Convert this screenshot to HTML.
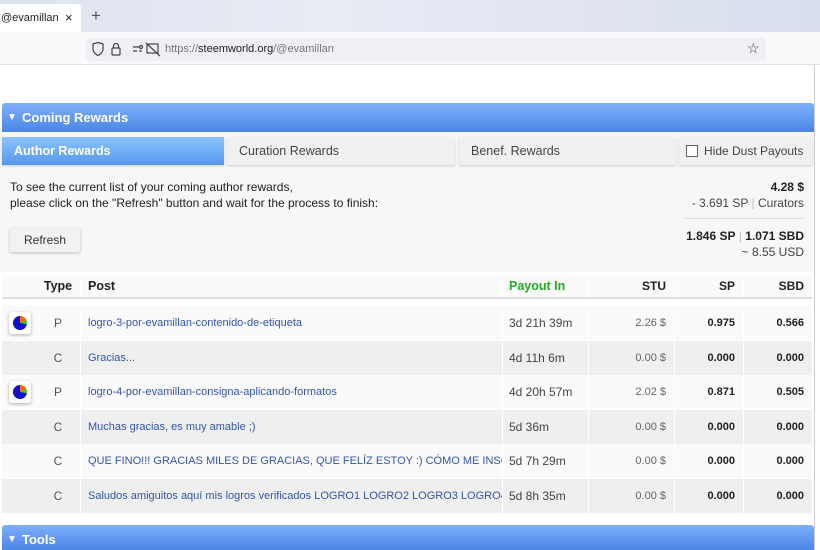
<!DOCTYPE html>
<html><head><style>
*{margin:0;padding:0;box-sizing:border-box}
body{width:820px;height:550px;overflow:hidden;background:#fff;font-family:"Liberation Sans",sans-serif;font-size:12px;color:#333;position:relative}
.a{position:absolute}
.hdr{background:linear-gradient(#7eb0fb,#4a85e6);color:#fff;font-weight:bold;font-size:13px;border-radius:3px 3px 0 0}
.tab{background:#f0f0f0;color:#444;font-size:12.5px;padding:7px 12px;height:28px;box-shadow:0 1px 2px #ccc;white-space:nowrap}
.row{position:absolute;left:2px;width:810px;height:34px}
.row div{position:absolute;top:0;height:34px;line-height:34px}
.c1{left:0;width:34px}
.c2{left:34px;width:44px;text-align:center;color:#555}
.c3{left:78px;width:422px;padding-left:7px;color:#3355aa;white-space:nowrap;overflow:hidden;border-left:1px solid #fff;font-size:11px}
.c4{left:500px;width:86px;padding-left:6px;color:#444;border-left:1px solid #fff}
.c5{left:586px;width:86px;text-align:right;padding-right:8px;color:#666;font-size:11px;border-left:1px solid #fff}
.c6{left:672px;width:69px;text-align:right;padding-right:8px;font-weight:bold;font-size:11px;color:#222;border-left:1px solid #fff}
.c7{left:741px;width:69px;text-align:right;padding-right:8px;font-weight:bold;font-size:11px;color:#222;border-left:1px solid #fff}
.g{background:#efefef}.w{background:#fafafa}
.pie{position:absolute;left:7px;top:6px;width:22px;height:22px;background:#fff;border-radius:3px;box-shadow:0 1px 3px #aaa}
.pie i{position:absolute;left:4px;top:4px;width:14px;height:14px;border-radius:50%;background:conic-gradient(#f60 0 18%,#3c3 18% 28%,#11c 28%)}
</style></head><body>
<div class="a" style="left:0;top:0;width:820px;height:32px;background:linear-gradient(90deg,#dfe3ee,#e9ecf5 40%,#d8deec)"></div>
<div class="a" style="left:0;top:4px;width:81px;height:28px;background:#fff;border-radius:0 4px 0 0;font-size:11px;color:#222;padding:8px 0 0 1px">@evamillan<span style="position:absolute;left:65px;top:6px;font-size:13px">×</span></div>
<div class="a" style="left:91px;top:6px;font-size:17px;color:#555">+</div>
<div class="a" style="left:0;top:32px;width:820px;height:33px;background:#f9f9fb;border-bottom:1px solid #e0e0e6"></div>
<div class="a" style="left:86px;top:38px;width:680px;height:23px;background:#f0f0f4;border-radius:4px"></div>
<svg class="a" style="left:90px;top:41px" width="80" height="17" viewBox="0 0 80 17" fill="none" stroke="#444" stroke-width="1.2"><path d="M3 3 L8 1.5 L13 3 V8 C13 12 8 14.5 8 14.5 C8 14.5 3 12 3 8Z"/><rect x="22" y="7" width="8" height="7" rx="1"/><path d="M23.5 7 V5 a2.5 2.5 0 0 1 5 0 V7"/><path d="M43 6h6M43 10h4M49 10h3"/><circle cx="51" cy="6" r="1.5"/><rect x="57" y="3" width="11" height="9"/><path d="M56 2 L70 15"/></svg>
<div class="a" style="left:165px;top:43px;font-size:11px;color:#777">https://<span style="color:#222">steemworld.org</span>/@evamillan</div>
<div class="a" style="left:747px;top:40px;font-size:14px;color:#444">☆</div>
<div class="a" style="left:814px;top:65px;width:1px;height:485px;background:#ccc"></div>
<div class="a hdr" style="left:2px;top:103px;width:812px;height:29px;padding:7px 0 0 20px"><span style="position:absolute;left:5px;top:9px;font-size:10px">▼</span>Coming Rewards</div>
<div class="a" style="left:0;top:132px;width:814px;height:140px;background:#f7f7f7"></div>
<div class="a tab" style="left:2px;top:137px;width:222px;background:linear-gradient(#8cc4ff,#5597ee);color:#fff;font-weight:bold">Author Rewards</div>
<div class="a tab" style="left:227px;top:137px;width:228px">Curation Rewards</div>
<div class="a tab" style="left:459px;top:137px;width:217px">Benef. Rewards</div>
<div class="a tab" style="left:679px;top:137px;width:133px;padding-left:25px;font-size:12px">Hide Dust Payouts<span style="position:absolute;left:7px;top:8px;width:12px;height:12px;border:1px solid #666;background:#fff"></span></div>
<div class="a" style="left:10px;top:179px;line-height:16px;color:#222">To see the current list of your coming author rewards,<br>please click on the "Refresh" button and wait for the process to finish:</div>
<div class="a" style="left:600px;top:179px;width:204px;text-align:right;line-height:16px;color:#444"><b style="color:#222">4.28 $</b><br>- 3.691 SP <span style="color:#bbb">|</span> Curators</div>
<div class="a" style="left:685px;top:218px;width:119px;height:1px;background:#ddd"></div>
<div class="a" style="left:600px;top:228px;width:204px;text-align:right;line-height:16px;color:#444"><b style="color:#222">1.846 SP</b> <span style="color:#bbb">|</span> <b style="color:#222">1.071 SBD</b><br>~ 8.55 USD</div>
<div class="a" style="left:10px;top:228px;width:70px;height:24px;background:#f2f2f2;box-shadow:0 1px 3px #bbb;border-radius:2px;text-align:center;line-height:24px;color:#333">Refresh</div>
<div class="row w" style="top:275px;height:24px;border-bottom:2px solid #ddd;font-weight:bold;font-size:12.5px;color:#222">
<div class="c1" style="height:22px"></div><div class="c2" style="height:22px;line-height:22px;color:#222">Type</div><div class="c3" style="height:22px;line-height:22px;color:#222;font-size:12.5px">Post</div><div class="c4" style="height:22px;line-height:22px;color:#22aa22">Payout In</div><div class="c5" style="height:22px;line-height:22px;color:#222;font-size:12px">STU</div><div class="c6" style="height:22px;line-height:22px;font-size:12px">SP</div><div class="c7" style="height:22px;line-height:22px;font-size:12px">SBD</div></div>
<div class="row w" style="top:306px"><div class="c1"><span class="pie"><i></i></span></div><div class="c2">P</div><div class="c3">logro-3-por-evamillan-contenido-de-etiqueta</div><div class="c4">3d 21h 39m</div><div class="c5">2.26 $</div><div class="c6">0.975</div><div class="c7">0.566</div></div>
<div class="row g" style="top:341px"><div class="c1"></div><div class="c2">C</div><div class="c3">Gracias...</div><div class="c4">4d 11h 6m</div><div class="c5">0.00 $</div><div class="c6">0.000</div><div class="c7">0.000</div></div>
<div class="row w" style="top:375px"><div class="c1"><span class="pie"><i></i></span></div><div class="c2">P</div><div class="c3">logro-4-por-evamillan-consigna-aplicando-formatos</div><div class="c4">4d 20h 57m</div><div class="c5">2.02 $</div><div class="c6">0.871</div><div class="c7">0.505</div></div>
<div class="row g" style="top:410px"><div class="c1"></div><div class="c2">C</div><div class="c3">Muchas gracias, es muy amable ;)</div><div class="c4">5d 36m</div><div class="c5">0.00 $</div><div class="c6">0.000</div><div class="c7">0.000</div></div>
<div class="row w" style="top:444px"><div class="c1"></div><div class="c2">C</div><div class="c3">QUE FINO!!! GRACIAS MILES DE GRACIAS, QUE FELÍZ ESTOY :) CÓMO ME INSCRIBO EN ESA</div><div class="c4">5d 7h 29m</div><div class="c5">0.00 $</div><div class="c6">0.000</div><div class="c7">0.000</div></div>
<div class="row g" style="top:479px"><div class="c1"></div><div class="c2">C</div><div class="c3">Saludos amiguitos aquí mis logros verificados LOGRO1 LOGRO2 LOGRO3 LOGRO4 Me encanta</div><div class="c4">5d 8h 35m</div><div class="c5">0.00 $</div><div class="c6">0.000</div><div class="c7">0.000</div></div>
<div class="a hdr" style="left:2px;top:525px;width:812px;height:25px;padding:7px 0 0 20px"><span style="position:absolute;left:5px;top:9px;font-size:10px">▼</span>Tools</div>
</body></html>
